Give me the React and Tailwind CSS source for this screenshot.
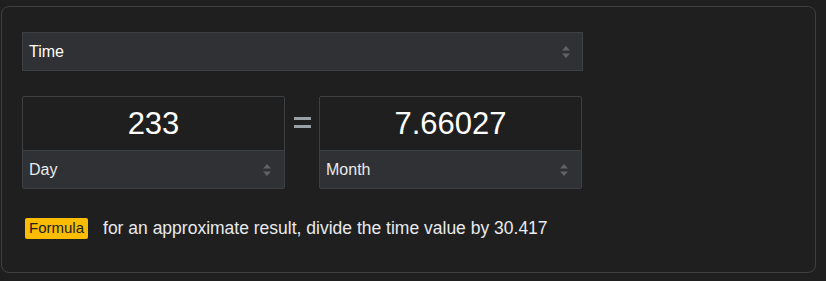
import { useState } from "react";

function Arrows() {
  return (
    <svg width="10" height="14" viewBox="0 0 10 14" className="shrink-0">
      <path d="M5 1 L9 5.5 L1 5.5 Z" fill="#5f6368" />
      <path d="M5 13 L9 8.5 L1 8.5 Z" fill="#5f6368" />
    </svg>
  );
}

function UnitBox({ value, unit }) {
  return (
    <div className="w-[263px] flex flex-col border border-[#3c4043] rounded-[2px] overflow-hidden">
      <div className="h-[53px] flex items-center justify-center text-[31px] text-white leading-none">
        {value}
      </div>
      <div className="h-[38px] bg-[#303134] border-t border-[#3c4043] flex items-center justify-between pl-[6px] pr-[12px] text-[16px] text-[#e8eaed]">
        <span>{unit}</span>
        <Arrows />
      </div>
    </div>
  );
}

export default function App() {
  const [kind] = useState("Time");

  return (
    <div
      className="w-[826px] h-[281px] bg-[#1f1f1f] pt-[6px] pl-[1px]"
      style={{ fontFamily: "Arial, 'Liberation Sans', sans-serif" }}
    >
      <div className="w-[815px] h-[267px] border border-[#3c4043] rounded-[8px] px-[20px] pt-[25px]">
        {/* Category select */}
        <div className="w-[561px] h-[39px] bg-[#303134] border border-[#3c4043] flex items-center justify-between pl-[6px] pr-[11px] text-[16px] text-white">
          <span>{kind}</span>
          <Arrows />
        </div>

        {/* Converter row */}
        <div className="w-[560px] mt-[25px] flex items-start justify-between">
          <UnitBox value="233" unit="Day" />
          <div className="w-[34px] pt-[21px] flex flex-col items-center gap-[5px]">
            <div className="w-[17px] h-[3px] bg-[#9aa0a6]" />
            <div className="w-[17px] h-[3px] bg-[#9aa0a6]" />
          </div>
          <UnitBox value="7.66027" unit="Month" />
        </div>

        {/* Formula */}
        <div className="mt-[26px] ml-[3px] flex items-center gap-[15px]">
          <span className="h-[21px] px-[4px] rounded-[2px] bg-[#fbbc04] text-[#202124] text-[15px] flex items-center">
            Formula
          </span>
          <span className="text-[17.5px] text-[#e8eaed]">
            for an approximate result, divide the time value by 30.417
          </span>
        </div>
      </div>
    </div>
  );
}
